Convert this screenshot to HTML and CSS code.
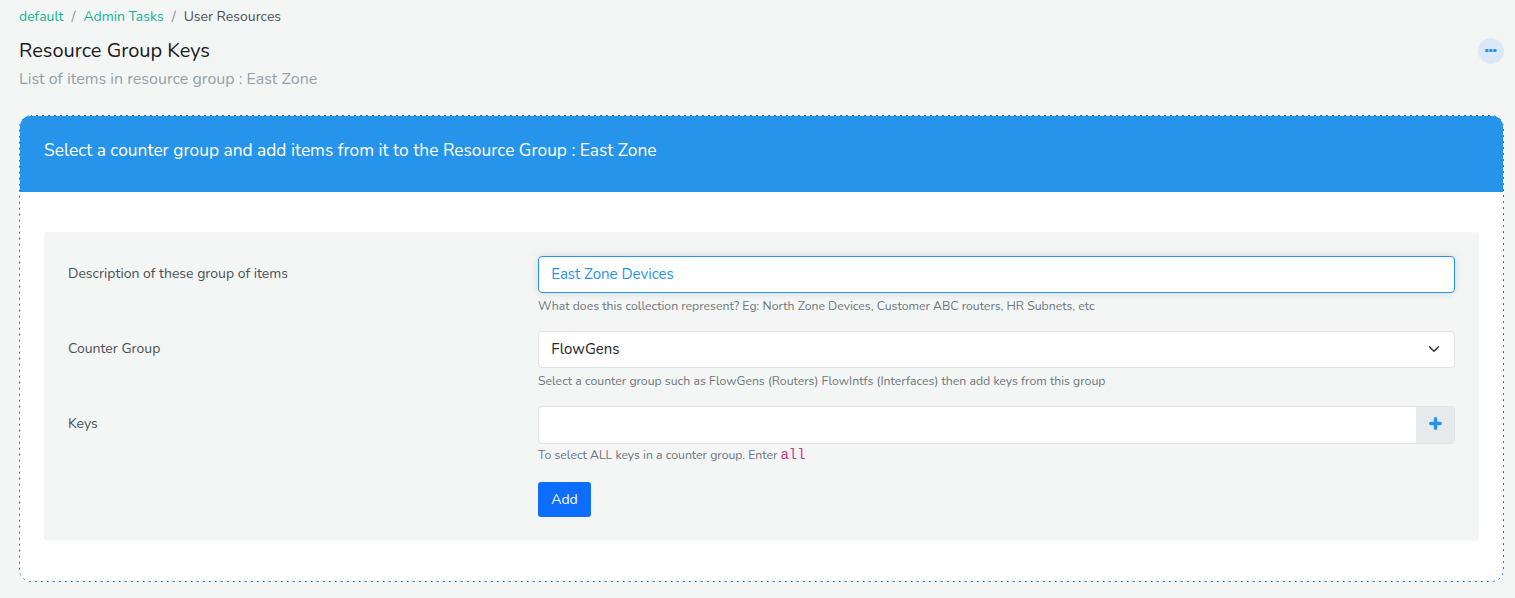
FILE: index.html
```html
<!DOCTYPE html>
<html lang="en">
<head>
<meta charset="utf-8">
<title>Resource Group Keys</title>
<link rel="stylesheet" href="styles.css">
</head>
<body>
<nav class="breadcrumb">
  <a href="#">default</a><span class="sep">/</span><a href="#">Admin Tasks</a><span class="sep">/</span><span>User Resources</span>
</nav>
<header class="page-header">
  <div>
    <h1>Resource Group Keys</h1>
    <p class="subtitle">List of items in resource group : East Zone</p>
  </div>
  <button class="more" aria-label="More">
    <svg width="12" height="3" viewBox="0 0 12 3"><rect x=".3" width="3.2" height="3" rx=".3"/><rect x="4.3" width="3.2" height="3" rx=".3"/><rect x="8.3" width="3.2" height="3" rx=".3"/></svg>
  </button>
</header>
<main class="card">
  <svg class="outline" aria-hidden="true"><rect x=".5" y=".5" width="1484" height="466" rx="11.65"/></svg>
  <div class="card-header">Select a counter group and add items from it to the Resource Group : East Zone</div>
  <div class="card-body">
    <form class="panel">
      <div class="row">
        <label>Description of these group of items</label>
        <div>
          <div class="control focused">East Zone Devices</div>
          <div class="help">What does this collection represent? Eg: North Zone Devices, Customer ABC routers, HR Subnets, etc</div>
        </div>
      </div>
      <div class="row">
        <label>Counter Group</label>
        <div>
          <div class="control">FlowGens
            <svg class="chevron" width="12" height="12" viewBox="0 0 16 16"><path d="m2 5 6 6 6-6"/></svg>
          </div>
          <div class="help">Select a counter group such as FlowGens (Routers) FlowIntfs (Interfaces) then add keys from this group</div>
        </div>
      </div>
      <div class="row row-keys">
        <label>Keys</label>
        <div>
          <div class="control keys">
            <span class="plus"><svg width="13" height="13" viewBox="0 0 13 13"><path d="M6.5 1.7v9.6M1.7 6.5h9.6"/></svg></span>
          </div>
          <div class="help help-all"><span>To select ALL keys in a counter group. Enter</span><code>all</code></div>
        </div>
      </div>
      <div class="row row-action">
        <span></span>
        <div><button type="button" class="add">Add</button></div>
      </div>
    </form>
  </div>
</main>
</body>
</html>
```
FILE: styles.css
```css
* { box-sizing: border-box; }
body {
  margin: 0;
  padding: 0 11px 0 19px;
  background: #f4f6f5;
  color: #495057;
  font-family: Nunito, Lato, "Noto Sans", sans-serif;
  font-size: 14px;
}
h1, p { margin: 0; font-weight: 400; }
a { color: #12b399; text-decoration: none; }
.breadcrumb { display: flex; height: 32px; line-height: 34px; }
.sep { width: 20px; text-align: center; color: #868e96; }
.page-header { display: flex; justify-content: space-between; align-items: flex-start; height: 83px; padding-top: 6px; }
h1 { height: 25px; line-height: 25px; font-size: 20px; color: #1a1a1a; }
.subtitle { margin-top: 4px; height: 24px; line-height: 24px; font-size: 16px; color: #98a0a7; }
.more {
  display: grid; place-items: center;
  width: 26px; height: 26px; padding: 0 0 1px;
  border: 0; border-radius: 50%;
  background: #dce8f8; fill: #2794eb;
}
.more svg { display: block; }
.card { position: relative; height: 467px; padding: 1px; background: #fff; border-radius: 11px; overflow: hidden; }
.outline { position: absolute; inset: 0; width: 100%; height: 100%; pointer-events: none; }
.outline rect { fill: none; stroke: #0d6efd; stroke-dasharray: 2 4; stroke-dashoffset: 1.15; }
.card-header { height: 76px; padding: 22px 24px 0; line-height: 25px; background: #2794eb; color: #fff; font-size: 17.33px; border-radius: 10px 10px 0 0; }
.card-body { padding: 40px 24px; }
.panel { height: 309px; padding: 24px; background: #f4f6f5; border-radius: 4px; }
.row { display: grid; grid-template-columns: 470px 1fr; height: 75px; }
.row-keys { height: 76px; }
.row-action { height: 35px; }
label { line-height: 35px; }
.control {
  display: flex; align-items: center; justify-content: space-between;
  height: 37px; padding: 0 14px 2px 12.25px;
  background: #fff; border: 1px solid #e6e4e1; border-radius: 4px;
  color: #212529; font-size: 15px;
}
.focused { border-color: #2794eb; color: #2794eb; box-shadow: 0 0 10px rgba(0, 0, 0, .12); }
.chevron { margin-top: 1px; fill: none; stroke: #343a40; stroke-width: 2; stroke-linecap: round; stroke-linejoin: round; }
.keys { height: 38px; padding: 0; justify-content: flex-end; overflow: hidden; }
.plus { display: grid; place-items: center; width: 38px; height: 36px; padding: 0 0 3px 1px; background: #e6eaed; }
.plus svg { fill: none; stroke: #2794eb; stroke-width: 3.4; stroke-linecap: round; }
.help { height: 20px; margin-top: 3px; line-height: 20px; font-size: 12.26px; color: #6c757d; white-space: nowrap; }
.help-all { display: flex; margin-top: 1px; }
code { margin-left: 3px; font: 14px/20px "Liberation Mono", monospace; color: #d63384; }
.add { width: 53px; height: 35px; padding: 0; border: 0; border-radius: 3px; background: #0d6efd; color: #fff; font: inherit; }
```
